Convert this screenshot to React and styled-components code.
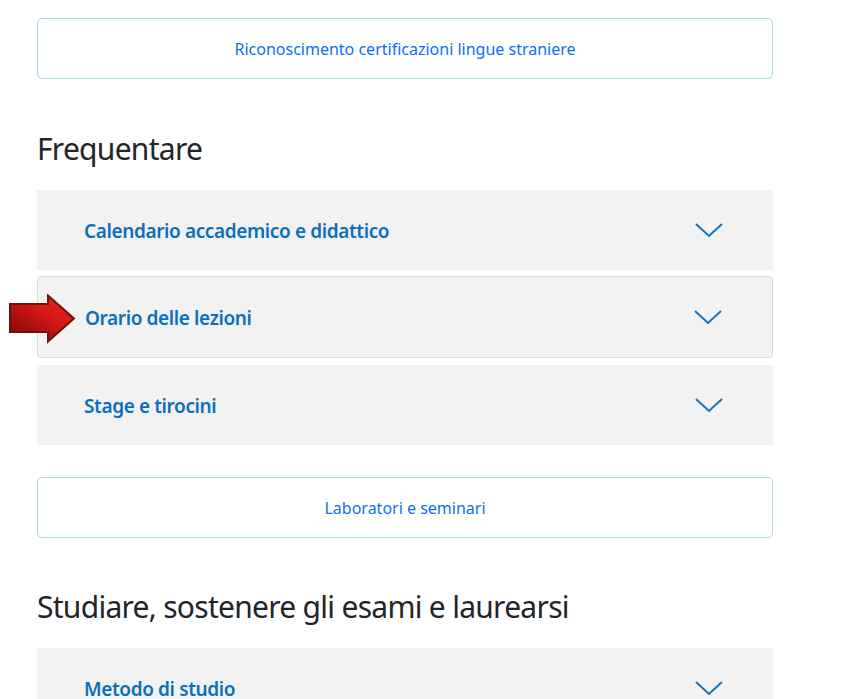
import React from "react";
import styled, { createGlobalStyle } from "styled-components";

const GlobalStyle = createGlobalStyle`
  html, body {
    margin: 0;
    padding: 0;
    height: 699px;
    overflow: hidden;
    background: #fff;
    font-family: "Noto Sans", "Open Sans", sans-serif;
  }
`;

const Page = styled.div`
  width: 736px;
  padding: 18px 0 0 37px;
  display: flex;
  flex-direction: column;
`;

const LinkBox = styled.a`
  display: flex;
  align-items: center;
  justify-content: center;
  box-sizing: border-box;
  height: 61px;
  margin-top: ${(p) => p.$top || 0}px;
  border: 1px solid #a8d8e8;
  border-radius: 5px;
  color: #0d6efd;
  font-size: 16px;
`;

const Heading = styled.h2`
  margin: ${(p) => p.$top}px 0 21px;
  height: 41px;
  line-height: 41px;
  font-size: 30px;
  font-weight: 400;
  letter-spacing: -0.72px;
  color: #212529;
`;

const Accordion = styled.div`
  display: flex;
  flex-direction: column;
  gap: 6px;
`;

const Row = styled.div`
  position: relative;
  box-sizing: border-box;
  height: ${(p) => (p.$hover ? 82 : 80)}px;
  margin-bottom: ${(p) => (p.$hover ? 1 : 0)}px;
  padding: 0 50px 0 47px;
  display: flex;
  align-items: center;
  justify-content: space-between;
  background: #f2f2f2;
  border: ${(p) => (p.$hover ? "1px solid #dcdcdc" : "none")};
  border-radius: ${(p) => (p.$hover ? 4 : 0)}px;
`;

const RowTitle = styled.span`
  padding-top: 2px;
  color: #0b6fbd;
  font-size: 19px;
  font-weight: 600;
  letter-spacing: -0.38px;
`;

const Chevron = styled.svg`
  width: 28px;
  height: 16px;
  fill: none;
  stroke: #1273c0;
  stroke-width: 2;
`;

const Arrow = styled.svg`
  position: absolute;
  left: 9px;
  top: 294px;
  width: 68px;
  height: 50px;
`;

const ChevronIcon = () => (
  <Chevron viewBox="0 0 28 16">
    <path d="M1 2l13 12L27 2" />
  </Chevron>
);

const App = () => {
  return (
    <Page>
      <GlobalStyle />
      <LinkBox>Riconoscimento certificazioni lingue straniere</LinkBox>
      <Heading $top={49}>Frequentare</Heading>
      <Accordion>
        <Row>
          <RowTitle>Calendario accademico e didattico</RowTitle>
          <ChevronIcon />
        </Row>
        <Row $hover>
          <RowTitle>Orario delle lezioni</RowTitle>
          <ChevronIcon />
        </Row>
        <Row>
          <RowTitle>Stage e tirocini</RowTitle>
          <ChevronIcon />
        </Row>
      </Accordion>
      <LinkBox $top={32}>Laboratori e seminari</LinkBox>
      <Heading $top={48}>Studiare, sostenere gli esami e laurearsi</Heading>
      <Accordion>
        <Row>
          <RowTitle>Metodo di studio</RowTitle>
          <ChevronIcon />
        </Row>
      </Accordion>
      <Arrow viewBox="0 0 68 50">
        <defs>
          <linearGradient id="red" x1="0" y1="1" x2="1" y2="0">
            <stop offset="0" stopColor="#7f0404" />
            <stop offset="0.6" stopColor="#d81818" />
            <stop offset="1" stopColor="#f02222" />
          </linearGradient>
        </defs>
        <path
          d="M1 10h38V1.5l26 23-26 23V38H1z"
          fill="url(#red)"
          stroke="#6a120c"
          strokeWidth="2"
        />
      </Arrow>
    </Page>
  );
};

export default App;
